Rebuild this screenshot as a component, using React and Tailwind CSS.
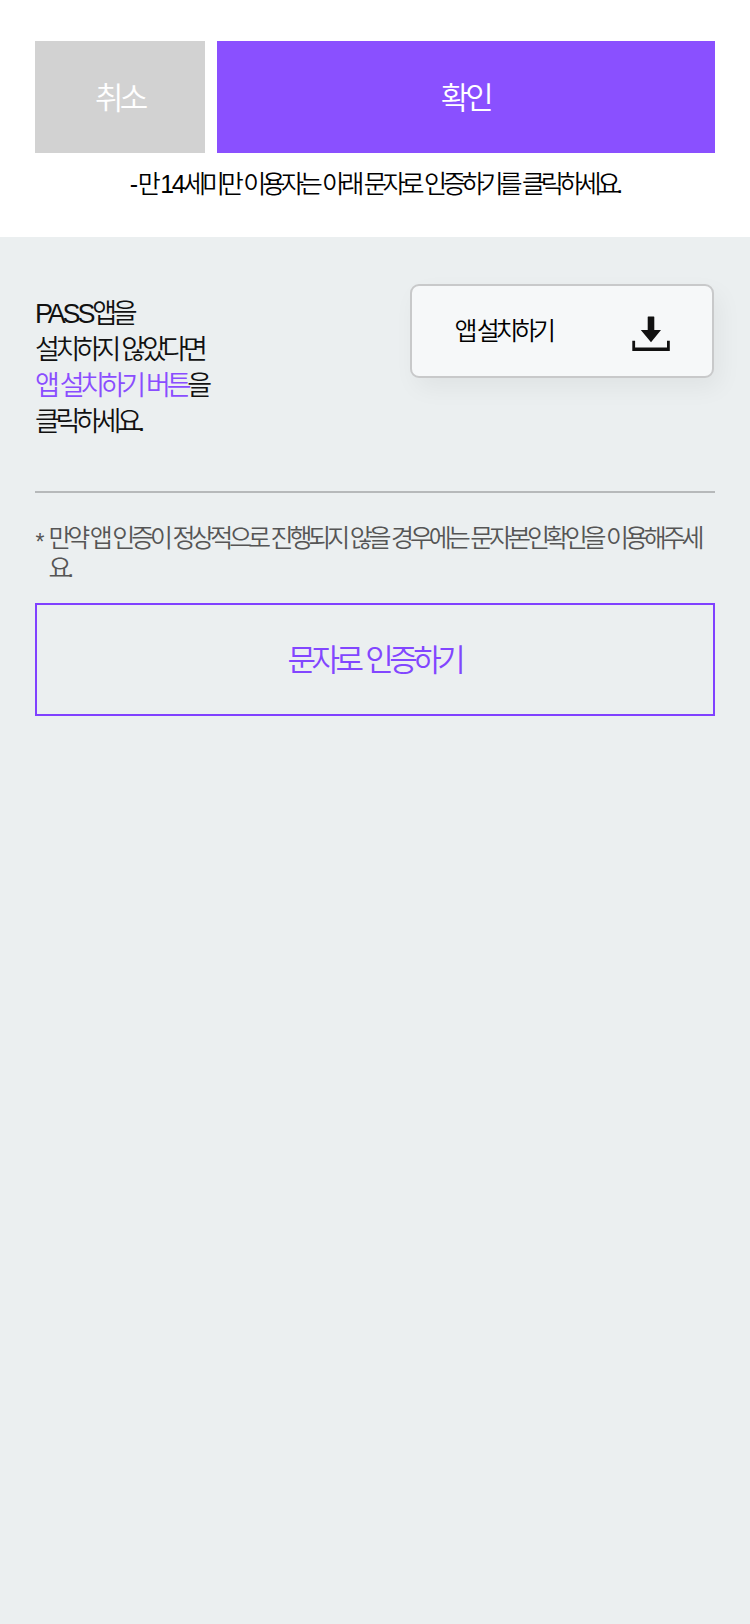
const FONT = "font-['Liberation_Sans','Noto_Sans_CJK_KR',sans-serif] font-[350]";

function DownloadIcon() {
  return (
    <svg className="mt-[6px] h-[36px] w-[38px] shrink-0" viewBox="0 0 38 36" fill="#111">
      <path d="M16.3 0.5H21.7Q22.3 0.5 22.3 1.1V14H29L19 26.3L8.8 14H15.7V1.1Q15.7 0.5 16.3 0.5Z" />
      <path d="M0.3 24.7H3.1V31.6H35V24.7H37.8V34.9H0.3Z" />
    </svg>
  );
}

export default function App() {
  return (
    <main className={`flex min-h-[1624px] w-[750px] flex-col bg-[#ebeff0] text-black ${FONT}`}>
      <section className="h-[237px] bg-white pr-[35.5px] pl-[35.4px] pt-[41.4px]">
        <div className="flex h-[112px] gap-[12px] text-[31px] text-white">
          <button className="w-[169.5px] bg-[#d2d2d2] pt-[3px] pr-[1px] tracking-[-4px]">취소</button>
          <button className="flex-1 bg-[#8a50ff] pt-[3px] pr-[1px] tracking-[-4px]">확인</button>
        </div>
        <p className="mt-[16px] pr-[1px] whitespace-nowrap text-center text-[25px] leading-[30px] tracking-[-4.15px] [word-spacing:0.9px]">
          <span className="tracking-[-0.5px]">-</span>만 <span className="tracking-[-2.5px]">14</span>세미만 이용자는 아래 문자로 인증하기를 클릭하세요.
        </p>
      </section>

      <section className="pr-[35.5px] pl-[35.4px] pt-[47px]">
        <div className="flex h-[207px] items-start justify-between">
          <p className="mt-[12px] -ml-[0.4px] whitespace-nowrap text-[27px] leading-[36px] tracking-[-4.3px] text-[#111] [word-spacing:1px]">
            <span className="tracking-[-3.2px]">PASS</span>앱을
            <br />
            설치하지 않았다면
            <br />
            <span className="text-[#8a4dff]">앱 설치하기 버튼</span>을
            <br />
            클릭하세요.
          </p>
          <button className="mr-[0.5px] flex h-[94px] w-[304px] items-center justify-between rounded-[9px] border-2 border-[#c8c9ca] bg-[#f6f8f9] pr-[42px] pl-[42.5px] text-[25px] tracking-[-4.3px] [word-spacing:1px] shadow-[6px_10px_24px_rgba(0,0,0,0.05)]">
            <span className="pt-[2px] whitespace-nowrap">앱 설치하기</span>
            <DownloadIcon />
          </button>
        </div>
        <hr className="border-t-2 border-[#b6b9ba]" />
        <div className="mt-[30px] flex text-[25px] leading-[30px] tracking-[-4.12px] text-[#555] [word-spacing:0.8px]">
          <span className="w-[13px] shrink-0 pt-[4px] text-[23px]">*</span>
          <p className="whitespace-nowrap">
            만약 앱 인증이 정상적으로 진행되지 않을 경우에는 문자본인확인을 이용해주세
            <br />
            요.
          </p>
        </div>
        <button className="mt-[20px] h-[113px] w-full border-2 border-[#8040ff] pt-[3px] pr-[1px] text-[31px] tracking-[-4.5px] text-[#8246ff] [word-spacing:1.5px]">
          문자로 인증하기
        </button>
      </section>
    </main>
  );
}
